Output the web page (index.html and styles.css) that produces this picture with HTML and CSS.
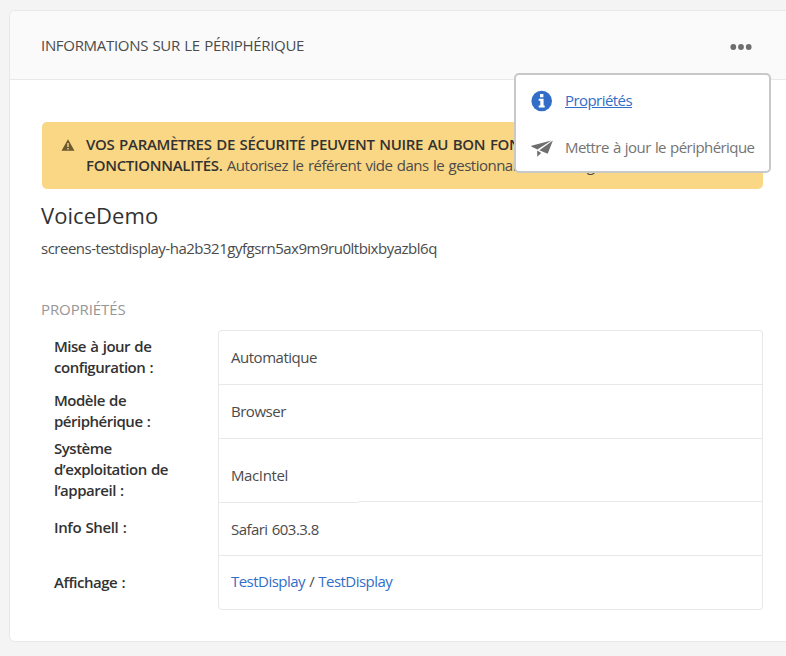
FILE: index.html
```
<!DOCTYPE html>
<html lang="fr">
<head>
<meta charset="utf-8">
<title>Informations sur le périphérique</title>
<link rel="stylesheet" href="styles.css">
</head>
<body>
<main class="card">
  <header class="card-header">
    <h1 class="card-title">INFORMATIONS SUR LE PÉRIPHÉRIQUE</h1>
    <svg class="more" width="22" height="8" viewBox="0 0 22 8"><circle cx="3.3" cy="4" r="2.9"/><circle cx="11" cy="4" r="2.9"/><circle cx="18.7" cy="4" r="2.9"/></svg>
    <nav class="menu">
      <a class="menu-item active">
        <svg width="22" height="22" viewBox="0 0 22 22"><circle cx="10.7" cy="11" r="10.3" fill="#326ec8"/><path fill="#fff" d="M9 4h3.4v3.2H9zM7.7 8.7h4.9v6.7h1.1v2h-6v-2h1.6v-4.7H7.7z"/></svg>
        <span>Propriétés</span>
      </a>
      <a class="menu-item">
        <svg width="22" height="22" viewBox="0 0 22 22"><path fill="#6e6e6e" d="M20.4 3.4.3 8.8v.8l6.1 2.8zM21.9 3.5 8.4 13.2l8.3 3.5zM6.2 13.6v6.2l4-3.8z"/></svg>
        <span>Mettre à jour le périphérique</span>
      </a>
    </nav>
  </header>
  <section class="card-body">
    <div class="alert">
      <svg class="alert-icon" width="14" height="12" viewBox="0 0 14 12"><path fill="#6b5930" d="M7 .3 13.5 11.8H.5z"/><path fill="#fad784" d="M6.3 4h1.4v4H6.3zM6.3 9h1.4v1.4H6.3z"/></svg>
      <p class="alert-text"><strong>VOS PARAMÈTRES DE SÉCURITÉ PEUVENT NUIRE AU BON FONCTIONNEMENT DES FONCTIONNALITÉS.</strong> Autorisez le référent vide dans le gestionnaire de configuration.</p>
    </div>
    <h2 class="device-name">VoiceDemo</h2>
    <p class="device-id">screens-testdisplay-ha2b321gyfgsrn5ax9m9ru0ltbixbyazbl6q</p>
    <h3 class="section-title">PROPRIÉTÉS</h3>
    <dl class="properties">
      <dt>Mise à jour de configuration :</dt><dd>Automatique</dd>
      <dt>Modèle de périphérique :</dt><dd>Browser</dd>
      <dt class="os">Système d’exploitation de l’appareil :</dt><dd class="os">MacIntel</dd>
      <dt class="shell">Info Shell :</dt><dd class="shell">Safari 603.3.8</dd>
      <dt class="display">Affichage :</dt><dd class="display"><a>TestDisplay</a> / <a>TestDisplay</a></dd>
    </dl>
  </section>
</main>
</body>
</html>
```
FILE: styles.css
```
* { box-sizing: border-box; }

body {
  margin: 0;
  height: 656px;
  overflow: hidden;
  background: #f4f4f4;
  color: #4b4b4b;
  font: 15px/21px "Open Sans", "Noto Sans", sans-serif;
  letter-spacing: -0.53px;
  word-spacing: 0.8px;
}

h1, h2, h3, p, dl, dd { margin: 0; font-weight: 400; }

.card {
  width: 790px;
  height: 632px;
  margin: 10px 0 0 9px;
  border: 1px solid #e8e8e8;
  border-radius: 6px;
  background: #fff;
  overflow: hidden;
}

.card-header {
  position: relative;
  display: flex;
  justify-content: space-between;
  height: 69px;
  padding: 24px 46px 0 31px;
  border-bottom: 1px solid #e8e8e8;
  background: #fafafa;
}

.card-title { font-size: 15px; letter-spacing: -0.31px; }

.more { margin-top: 8px; fill: #6e6e6e; }

.menu {
  position: absolute;
  z-index: 1;
  top: 62px;
  left: 504px;
  display: flex;
  flex-direction: column;
  gap: 25px;
  width: 257px;
  height: 100px;
  padding: 15px 0 0 15px;
  border: 2px solid #c8c8c8;
  border-radius: 5px;
  background: #fff;
}

.menu-item {
  display: flex;
  align-items: flex-start;
  gap: 12px;
  height: 22px;
  color: #747474;
  white-space: nowrap;
  letter-spacing: -0.56px;
}

.menu-item.active { color: #326ec8; text-decoration: underline; }

.card-body { padding: 42px 35px 0 32px; }

.alert {
  display: flex;
  gap: 11px;
  width: 721px;
  height: 67px;
  padding: 12px 20px 0 19px;
  border-radius: 5px;
  background: #fad784;
}

.alert-icon { flex: none; margin-top: 5px; }

.alert-text strong {
  color: #323232;
  font-weight: 600;
  letter-spacing: -0.3px;
}

.alert-text { letter-spacing: -0.5px; word-spacing: 1px; }

.device-name {
  margin-top: 11px;
  margin-left: -1px;
  color: #323232;
  font-size: 22px;
  line-height: 30px;
  letter-spacing: 0.05px;
}

.device-id { margin-top: 8px; margin-left: -1px; letter-spacing: -0.49px; }

.section-title {
  margin-top: 40px;
  margin-left: -1px;
  color: #969696;
  font-size: 15px;
  letter-spacing: -0.1px;
}

.properties {
  display: grid;
  grid-template-columns: 176px 545px;
  grid-template-rows: 54px 54px 64px 53px 55px;
  width: 721px;
  margin-top: 10px;
}

.properties dt {
  padding: 6px 40px 0 12px;
  color: #323232;
  font-weight: 600;
  letter-spacing: -0.48px;
}

.properties dt.os { padding-top: 0; }
.properties dt.shell { padding-top: 15px; letter-spacing: -0.38px; }
.properties dt.display { padding-top: 17px; }

.properties dd {
  padding: 16px 12px 0;
  border: 1px solid #e8e8e8;
  border-bottom: 0;
  letter-spacing: -0.48px;
}

.properties dd:first-of-type { border-radius: 4px 4px 0 0; }

.properties dd.os {
  padding-top: 26px;
  letter-spacing: -0.38px;
  background: linear-gradient(#e8e8e8, #e8e8e8) 140px 100% / 100% 1px no-repeat;
  background-size: 403px 1px;
  background-position: 100% 100%;
}

.properties dd.shell {
  padding-top: 17px;
  border-top: 0;
  letter-spacing: -0.54px;
  background: linear-gradient(#e8e8e8, #e8e8e8) 0 0 / 140px 1px no-repeat;
}

.properties dd.display {
  padding-top: 15px;
  border-bottom: 1px solid #e8e8e8;
  border-radius: 0 0 4px 4px;
  letter-spacing: -0.53px;
}

.properties a { color: #326ec8; }
```
